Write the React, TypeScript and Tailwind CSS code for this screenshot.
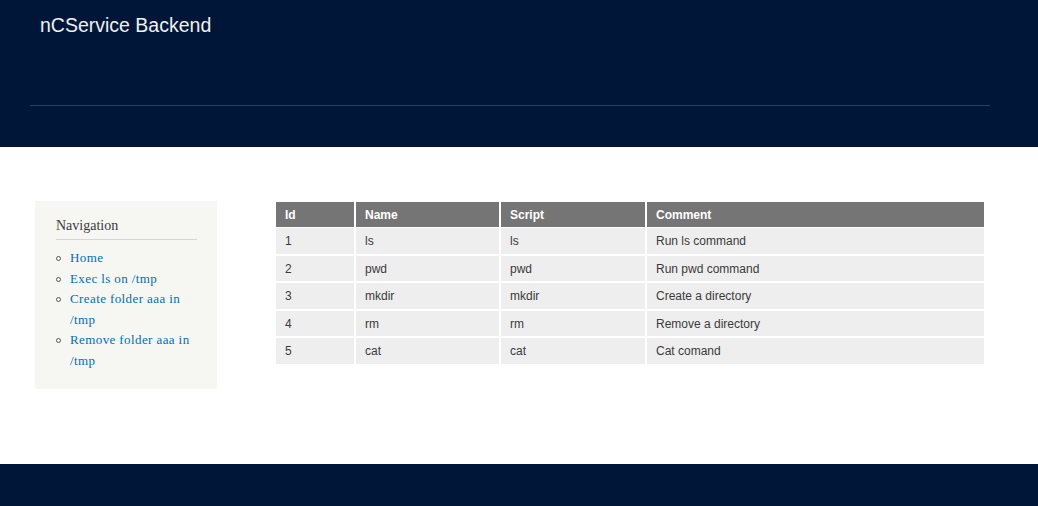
const rows = [
  { id: 1, name: 'ls', script: 'ls', comment: 'Run ls command' },
  { id: 2, name: 'pwd', script: 'pwd', comment: 'Run pwd command' },
  { id: 3, name: 'mkdir', script: 'mkdir', comment: 'Create a directory' },
  { id: 4, name: 'rm', script: 'rm', comment: 'Remove a directory' },
  { id: 5, name: 'cat', script: 'cat', comment: 'Cat comand' },
]

const links = ['Home', 'Exec ls on /tmp', 'Create folder aaa in /tmp', 'Remove folder aaa in /tmp']

export default function App() {
  return (
    <div className="min-h-[506px] flex flex-col bg-white font-['Liberation_Sans',Arial,sans-serif]">
      <header className="h-[147px] bg-[#001639] pl-[30px] pr-[48px] flex flex-col">
        <h1 className="pl-[10px] pt-[13px] text-[19.5px] leading-[24px] text-[#f0f0f0]">nCService Backend</h1>
        <div className="mt-[68px] h-px bg-[#2a3f6b]" />
      </header>

      <main className="flex-1 flex items-start pt-[54px] pb-[75px] pl-[35px] pr-[54px]">
        <aside className="w-[182px] bg-[#f6f6f2] pl-[21px] pr-[20px] pt-[15px] pb-[17px] font-['Liberation_Serif','Times_New_Roman',serif]">
          <h2 className="text-[14px] leading-[20px] text-[#3b3b3b] pb-[3px] border-b border-[#d6d6d6]">Navigation</h2>
          <ul className="mt-[8px]">
            {links.map((l) => (
              <li key={l} className="flex items-start text-[13px] leading-[20.6px] tracking-[0.4px]">
                <span className="mt-[8px] mr-[9px] w-[5px] h-[5px] shrink-0 rounded-full border border-[#555]" />
                <a className="text-[#0071b3]">{l}</a>
              </li>
            ))}
          </ul>
        </aside>

        <div className="ml-[59px] flex-1 mt-[1px]">
          <div className="grid grid-cols-[78px_143px_144px_1fr] gap-x-[2px] text-[12px]">
            {['Id', 'Name', 'Script', 'Comment'].map((h) => (
              <div key={h} className="h-[25px] bg-[#757575] text-white font-bold pl-[9px] flex items-center">
                {h}
              </div>
            ))}
          </div>
          <div className="mt-[1px] flex flex-col gap-[2px]">
            {rows.map((r) => (
              <div key={r.id} className="grid grid-cols-[78px_143px_144px_1fr] gap-x-[2px] text-[12px] text-[#3a3a3a]">
                <div className="h-[25.5px] bg-[#eeeeee] pl-[9px] pt-[1px] flex items-center">{r.id}</div>
                <div className="h-[25.5px] bg-[#eeeeee] pl-[9px] pt-[1px] flex items-center">{r.name}</div>
                <div className="h-[25.5px] bg-[#eeeeee] pl-[9px] pt-[1px] flex items-center">{r.script}</div>
                <div className="h-[25.5px] bg-[#eeeeee] pl-[9px] pt-[1px] flex items-center">{r.comment}</div>
              </div>
            ))}
          </div>
        </div>
      </main>

      <footer className="h-[42px] bg-[#001639]" />
    </div>
  )
}
